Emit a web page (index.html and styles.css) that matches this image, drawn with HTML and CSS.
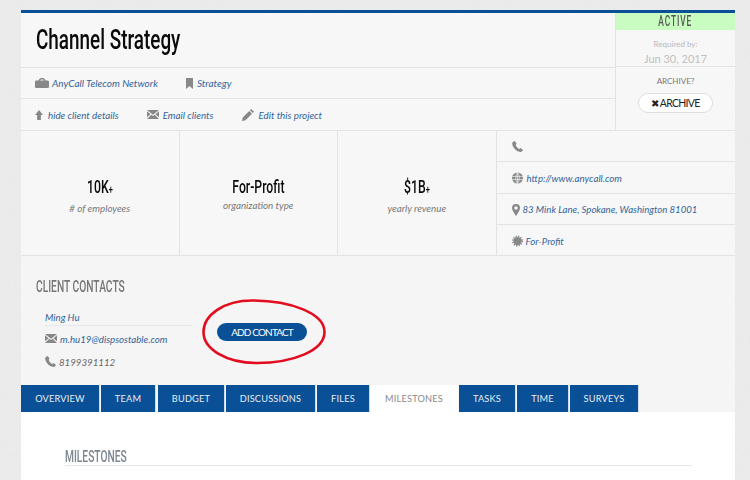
FILE: index.html
```html
<!DOCTYPE html>
<html lang="en">
<head>
<meta charset="utf-8">
<title>Channel Strategy</title>
<link rel="stylesheet" href="styles.css">
</head>
<body>
<svg class="defs" width="0" height="0" aria-hidden="true">
  <defs>
    <symbol id="i-brief" viewBox="0 0 14 10"><path fill-rule="evenodd" d="M3.500 2.500C4 .9 5 0 6 0h2c1 0 2 .9 2.500 2.500h2.100c.8 0 1.400.6 1.400 1.400v4.800c0 .8-.6 1.300-1.400 1.300H1.400C.6 10 0 9.500 0 8.700V3.900c0-.8.6-1.400 1.400-1.400zM5 2.500h4C8.700 1.900 8.300 1.500 7.800 1.500H6.200C5.700 1.500 5.300 1.900 5 2.500z"/></symbol>
    <symbol id="i-bookmark" viewBox="0 0 7 11"><path d="M0 0h7v11L3.500 8 0 11z"/></symbol>
    <symbol id="i-up" viewBox="0 0 8 10"><path d="M4 0l4 5H5.900v5H2.100V5H0z"/></symbol>
    <symbol id="i-mail" viewBox="0 0 12 9"><path d="M0 0h12L6 4.700zM0 1.300l3.600 2.900L0 7.300zM12 1.300L8.400 4.200 12 7.300zM4.300 4.800L6 6.100l1.700-1.300L12 9H0z"/></symbol>
    <symbol id="i-pencil" viewBox="0 0 12 12"><path d="M9.200 0L12 2.800l-1.300 1.300L7.900 1.300zM7.200 2l2.800 2.800L3.500 11.300 0 12l.7-3.500z"/></symbol>
    <symbol id="i-phone" viewBox="0 0 11 11"><path d="M2.800 0L.9.900C-.2 1.700 0 3.500.9 5.300c1.200 2.400 3.200 4.500 5.600 5.300 1.300.5 2.800.5 3.700-.3L11 8.900 8.600 7 7.200 7.900C6 7.400 4.300 5.500 3.700 3.900l.8-1.300z"/></symbol>
    <symbol id="i-globe" viewBox="0 0 12 12"><circle cx="6" cy="6" r="6"/><path d="M0 4.300h12M0 7.700h12M6 0v12M6 0C3.400 2.500 3.400 9.500 6 12M6 0c2.600 2.500 2.600 9.500 0 12" fill="none" stroke="#f7f7f7" stroke-width=".7"/></symbol>
    <symbol id="i-pin" viewBox="0 0 8 12"><path fill-rule="evenodd" d="M4 0a4 4 0 0 1 4 4c0 2.500-2.600 5.700-4 8C2.600 9.700 0 6.500 0 4a4 4 0 0 1 4-4zm0 2.200a1.800 1.800 0 1 0 0 3.600 1.800 1.800 0 0 0 0-3.600z"/></symbol>
    <symbol id="i-cert" viewBox="0 0 12 12"><circle cx="6" cy="6" r="4.500"/><circle cx="6" cy="6" r="5" fill="none" stroke="#888" stroke-width="2" stroke-dasharray="1.300 1.320"/></symbol>
  </defs>
</svg>
<svg class="paper" aria-hidden="true">
  <filter id="grain"><feTurbulence type="fractalNoise" baseFrequency=".7" numOctaves="3" seed="4"/><feColorMatrix values="0 0 0 0 .55  0 0 0 0 .55  0 0 0 0 .55  .14 .14 0 0 -.06"/></filter>
  <rect width="100%" height="100%" filter="url(#grain)"/>
</svg>

<main class="panel">
  <section class="top">
    <div class="top-main">
      <header class="title-row"><h1><span class="cond">Channel Strategy</span></h1></header>
      <div class="link-row link-row-a">
        <span class="item i-org"><svg class="ico brief"><use href="#i-brief"/></svg><a>AnyCall Telecom Network</a></span>
        <span class="item"><svg class="ico w7"><use href="#i-bookmark"/></svg><a>Strategy</a></span>
      </div>
      <div class="link-row link-row-b">
        <span class="item i-hide"><svg class="ico up"><use href="#i-up"/></svg><a>hide client details</a></span>
        <span class="item"><svg class="ico w12"><use href="#i-mail"/></svg><a>Email clients</a></span>
        <span class="item i-edit"><svg class="ico pencil"><use href="#i-pencil"/></svg><a>Edit this project</a></span>
      </div>
    </div>
    <aside class="top-side">
      <div class="status"><span class="cond">ACTIVE</span></div>
      <div class="required">
        <div class="req-label">Required by:</div>
        <div class="req-date">Jun 30, 2017</div>
      </div>
      <div class="archive">
        <div class="arch-label">ARCHIVE?</div>
        <button class="arch-btn" type="button"><span class="x">✖</span>ARCHIVE</button>
      </div>
    </aside>
  </section>

  <section class="details">
    <div class="stat"><div class="stat-num"><span class="cond">10K<small>+</small></span></div><div class="stat-lbl"># of employees</div></div>
    <div class="stat"><div class="stat-num"><span class="cond">For-Profit</span></div><div class="stat-lbl">organization type</div></div>
    <div class="stat"><div class="stat-num"><span class="cond">$1B<small>+</small></span></div><div class="stat-lbl">yearly revenue</div></div>
    <ul class="facts">
      <li><svg class="ico phone"><use href="#i-phone"/></svg></li>
      <li><svg class="ico w11 gap4"><use href="#i-globe"/></svg><a>http://www.anycall.com</a></li>
      <li class="f-addr"><svg class="ico w8"><use href="#i-pin"/></svg><a>83 Mink Lane, Spokane, Washington 81001</a></li>
      <li class="f-type"><svg class="ico w11 gap3"><use href="#i-cert"/></svg><a>For-Profit</a></li>
    </ul>
  </section>

  <section class="contacts">
    <h2><span class="cond">CLIENT CONTACTS</span></h2>
    <div class="contact-row">
      <div class="contact">
        <div class="c-name"><a>Ming Hu</a></div>
        <div class="c-line"><svg class="ico w12"><use href="#i-mail"/></svg><a>m.hu19@dispsostable.com</a></div>
        <div class="c-line c-phone"><svg class="ico phone"><use href="#i-phone"/></svg><span>8199391112</span></div>
      </div>
      <div class="add-wrap">
        <button class="add-btn" type="button">ADD CONTACT</button>
        <svg class="ring" viewBox="0 0 124 66" aria-hidden="true"><path d="M50 1.500C88 1.500 122.500 14 122.500 33 122.500 52 90 64 55 64 24 64 1.500 50 1.500 33 1.500 16 22 1.500 50 1.500z"/></svg>
      </div>
    </div>
  </section>

  <nav class="tabs">
    <a class="tab t1">OVERVIEW</a>
    <a class="tab t2">TEAM</a>
    <a class="tab t3">BUDGET</a>
    <a class="tab t4">DISCUSSIONS</a>
    <a class="tab t5">FILES</a>
    <a class="tab t6 on">MILESTONES</a>
    <a class="tab t7">TASKS</a>
    <a class="tab t8">TIME</a>
    <a class="tab t9">SURVEYS</a>
  </nav>

  <section class="content">
    <h2><span class="cond">MILESTONES</span></h2>
  </section>
</main>
</body>
</html>
```

FILE: styles.css
```css
* { box-sizing: border-box; }
html, body { margin: 0; padding: 0; height: 480px; overflow: hidden; }
body {
  position: relative;
  background: #eeeeee;
  font-family: Lato, "Noto Sans", sans-serif;
  color: #666;
}
.defs { position: absolute; }
.paper { position: absolute; inset: 0; width: 100%; height: 100%; }

.panel {
  position: relative;
  width: 714px;
  margin: 10px 0 0 21px;
  border-top: 3px solid #0a5096;
  background: #f7f7f7;
}
a { color: #33649a; font-style: italic; }
.cond { display: inline-block; white-space: nowrap; transform-origin: left center; }
.ico { display: block; flex: none; fill: #888; }
.brief { width: 14px; height: 10px; }
.up { width: 8px; height: 10px; }
.pencil { width: 12px; height: 12px; }
.phone { width: 11px; height: 11px; }
.w12 { width: 12px; height: 9px; }
.w11 { width: 11px; height: 12px; }
.w8 { width: 8px; height: 12px; }
.w7 { width: 7px; height: 11px; }

.top { display: flex; height: 118px; border-bottom: 1px solid #e3e3e3; }
.top-main { flex: 1; min-width: 0; }
.title-row { height: 55px; display: flex; align-items: center; padding-left: 15px; border-bottom: 1px solid #e3e3e3; }
h1 {
  margin: 0;
  font: 500 27px/1 Roboto, sans-serif;
  color: #0a0a0a;
}
h1 .cond { transform: scaleX(.7); }
.link-row { display: flex; align-items: center; padding-left: 14px; }
.link-row-a { height: 31px; gap: 28px; font-size: 10px; border-bottom: 1px solid #e3e3e3; }
.link-row-b { height: 31px; gap: 28px; font-size: 9.800px; }
.item { display: flex; align-items: center; gap: 4px; }
.i-org { gap: 3px; }
.i-hide { gap: 5px; }
.i-edit { margin-left: 1px; }

.top-side { width: 120px; flex: none; border-left: 1px solid #e3e3e3; display: flex; flex-direction: column; }
.status {
  height: 17px;
  background: #c8fcc0;
  color: #555;
  text-align: center;
  font: 500 14px/17px Roboto, sans-serif;
  letter-spacing: 1.500px;
}
.status .cond { transform: scaleX(.6); transform-origin: center; }
.required { height: 37px; border-bottom: 1px solid #e3e3e3; text-align: center; }
.req-label { font-size: 8px; line-height: 10px; padding-top: 9px; color: #b8b8b8; box-sizing: content-box; }
.req-date { font-size: 11px; line-height: 14px; margin-top: 3px; color: #c0c0c0; }
.archive { flex: 1; text-align: center; }
.arch-label { font-size: 8px; line-height: 10px; padding-top: 9px; color: #777; box-sizing: content-box; }
.arch-btn {
  display: block;
  width: 75px;
  height: 20px;
  margin: 7px auto 0;
  padding: 0;
  background: #fff;
  border: 1px solid #ddd;
  border-radius: 10px;
  font: 400 10.500px/18px Lato, sans-serif;
  letter-spacing: -.7px;
  color: #222;
}
.x { font-size: 10px; margin-right: 1px; }

.details { display: flex; height: 125px; border-bottom: 1px solid #e3e3e3; }
.stat {
  width: 158.500px;
  flex: none;
  border-right: 1px solid #e3e3e3;
  text-align: center;
  padding-top: 47px;
}
.stat-num { font: 500 18px/18px Roboto, sans-serif; color: #0a0a0a; }
.stat-num .cond { transform: scaleX(.68); transform-origin: center; }
.stat-num small { font-size: 11px; }
.stat-lbl { font-size: 9.800px; line-height: 12px; font-style: italic; margin-top: 3px; color: #777; }
.facts { list-style: none; margin: 0; padding: 0; flex: 1; min-width: 0; font-size: 9.700px; }
.facts li { height: 31px; display: flex; align-items: center; gap: 3px; padding-left: 15px; border-bottom: 1px solid #e3e3e3; }
.facts li:nth-child(2) { height: 32px; }
.facts li:last-child { border-bottom: 0; height: 30px; }
.gap4 { margin-right: 1px; }
.f-addr { gap: 2px; font-size: 9.600px; padding-top: 1px; }
.f-type { padding-top: 1px; }

.contacts { height: 129px; background: #f5f5f5; padding: 22px 15px 0; }
h2 {
  margin: 0;
  font: 500 16.500px/18px Roboto, sans-serif;
  color: #777;
}
h2 .cond { transform: scaleX(.62); }
.contact-row { display: flex; margin-top: 12px; padding-left: 9px; }
.contact { width: 147px; font-size: 9.700px; }
.c-name { height: 18px; line-height: 19px; border-bottom: 1px solid #e8e8e8; }
.c-line { display: flex; align-items: center; gap: 3px; margin-top: 6px; height: 13px; }
.c-phone { margin-top: 10px; color: #666; font-style: italic; }
.add-wrap { position: relative; margin: 15px 0 0 25px; }
.add-btn {
  display: block;
  width: 90px;
  height: 18px;
  padding: 0;
  background: #0a5096;
  border: 0;
  border-radius: 9px;
  color: #fff;
  font: 400 10px/18px Lato, sans-serif;
  letter-spacing: -.85px;
}
.ring { position: absolute; left: -15px; top: -24px; width: 124px; height: 66px; fill: none; stroke: #e30b1e; stroke-width: 2.600; }

.tabs { display: flex; height: 27px; background: #f5f5f5; }
.tab {
  display: block;
  height: 27px;
  background: #0a5096;
  color: #e8eef5;
  font: normal 400 9.200px/27px Lato, sans-serif;
  letter-spacing: .2px;
  text-align: center;
  border-right: 1px solid #cfdbe8;
  margin-right: 1px;
}
.t1 { width: 79px; }
.t2 { width: 55px; margin-right: 2px; }
.t3 { width: 67px; }
.t4 { width: 90px; margin-right: 1px; }
.t5 { width: 53px; margin-right: 0; }
.tab.on { width: 88px; background: #fff; color: #8a8a8a; border-right: 0; margin-right: 1px; }
.t7 { width: 57px; }
.t8 { width: 52px; }
.t9 { width: 69px; margin-right: 0; }

.content { height: 68px; background: #fff; padding: 36px 43px 0 44px; }
.content h2 { height: 18px; line-height: 17px; border-bottom: 1px solid #e6e6e6; color: #7d8791; }
```
